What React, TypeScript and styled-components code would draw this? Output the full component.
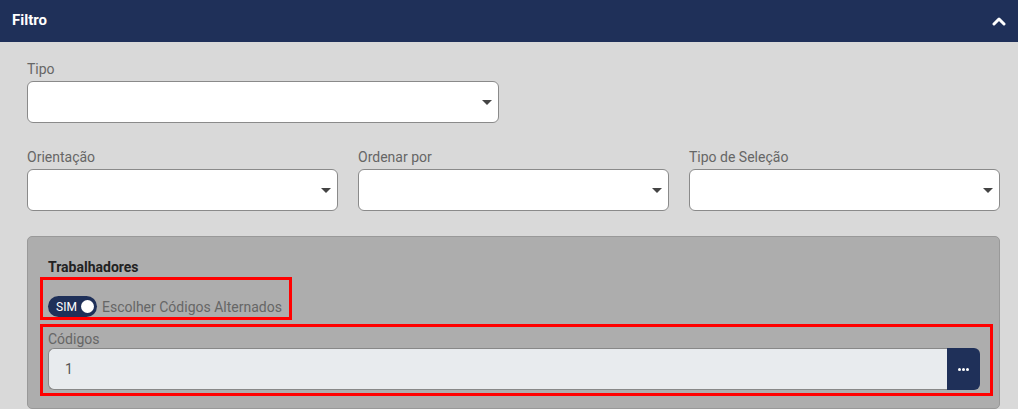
import React from 'react';
import styled, { createGlobalStyle } from 'styled-components';

const navy = '#1f3059';

const GlobalStyle = createGlobalStyle`
  html, body {
    margin: 0;
    padding: 0;
    background: #d9d9d9;
    font-family: Roboto, "Liberation Sans", Arial, sans-serif;
  }
  * {
    box-sizing: border-box;
  }
`;

const Page = styled.div`
  width: 1018px;
  height: 409px;
  overflow: hidden;
  background: #d9d9d9;
`;

const Header = styled.div`
  height: 42px;
  background: ${navy};
  display: flex;
  align-items: center;
  justify-content: space-between;
  padding: 0 12px 0 12px;
  color: #fff;
`;

const HeaderTitle = styled.div`
  font-size: 15px;
  font-weight: 700;
  margin-top: -2px;
`;

const Body = styled.div`
  padding: 19px 18px 0 27px;
`;

const Field = styled.div<{ width?: string }>`
  display: flex;
  flex-direction: column;
  width: ${(p) => p.width || 'auto'};
`;

const Label = styled.label`
  font-size: 14px;
  line-height: 17px;
  color: #666;
  margin-bottom: 3px;
`;

const SelectBox = styled.div`
  position: relative;
  height: 42px;
  background: #fff;
  border: 1px solid #8a8a8a;
  border-radius: 6px;
`;

const Caret = styled.span`
  position: absolute;
  right: 6px;
  top: 18px;
  width: 0;
  height: 0;
  border-left: 5px solid transparent;
  border-right: 5px solid transparent;
  border-top: 5px solid #444;
`;

const Row = styled.div`
  display: grid;
  grid-template-columns: repeat(3, 1fr);
  column-gap: 20px;
  margin-top: 26px;
`;

const Panel = styled.div`
  margin-top: 25px;
  background: #adadad;
  border: 1px solid #999;
  border-radius: 5px;
  padding: 22px 6px 12px 12px;
`;

const PanelTitle = styled.div`
  font-size: 14px;
  font-weight: 700;
  line-height: 17px;
  color: #222;
  padding-left: 8px;
`;

const Highlight = styled.div<{ width?: string; pad: string; gap?: number }>`
  border: 3px solid #ff0000;
  width: ${(p) => p.width || 'auto'};
  padding: ${(p) => p.pad};
  margin-top: ${(p) => p.gap || 0}px;
`;

const ToggleRow = styled.div`
  display: flex;
  align-items: center;
  gap: 5px;
`;

const Toggle = styled.div`
  width: 49px;
  height: 21px;
  border-radius: 11px;
  background: ${navy};
  display: flex;
  align-items: center;
  justify-content: space-between;
  padding: 0 3px 0 8px;
  color: #fff;
  font-size: 12px;
`;

const Knob = styled.span`
  width: 13px;
  height: 13px;
  border-radius: 50%;
  background: #fff;
`;

const ToggleText = styled.span`
  font-size: 14px;
  color: #666;
`;

const InputGroup = styled.div`
  display: flex;
  height: 42px;
`;

const Input = styled.div`
  flex: 1;
  background: #e8ebee;
  border: 1px solid #888;
  border-right: none;
  border-radius: 6px 0 0 6px;
  display: flex;
  align-items: center;
  padding-left: 16px;
  font-size: 14px;
  color: #555;
`;

const DotsButton = styled.div`
  width: 33px;
  background: ${navy};
  border-radius: 0 6px 6px 0;
  display: flex;
  align-items: center;
  justify-content: center;
  gap: 1px;
`;

const Dot = styled.span`
  width: 3px;
  height: 3px;
  border-radius: 50%;
  background: #fff;
`;

const ChevronUp = () => (
  <svg width="14" height="10" viewBox="0 0 14 10">
    <polyline points="2,8 7,3 12,8" fill="none" stroke="#fff" strokeWidth="3" strokeLinecap="round" strokeLinejoin="round" />
  </svg>
);

const Select: React.FC<{ label: string; width?: string }> = ({ label, width }) => (
  <Field width={width}>
    <Label>{label}</Label>
    <SelectBox>
      <Caret />
    </SelectBox>
  </Field>
);

export default function App() {
  return (
    <Page>
      <GlobalStyle />
      <Header>
        <HeaderTitle>Filtro</HeaderTitle>
        <ChevronUp />
      </Header>
      <Body>
        <Select label="Tipo" width="472px" />
        <Row>
          <Select label="Orientação" />
          <Select label="Ordenar por" />
          <Select label="Tipo de Seleção" />
        </Row>
        <Panel>
          <PanelTitle>Trabalhadores</PanelTitle>
          <Highlight width="252px" pad="16px 0 0 5px" gap={1}>
            <ToggleRow>
              <Toggle>
                SIM
                <Knob />
              </Toggle>
              <ToggleText>Escolher Códigos Alternados</ToggleText>
            </ToggleRow>
          </Highlight>
          <Highlight pad="2px 10px 3px 5px" gap={4}>
            <Label>Códigos</Label>
            <InputGroup>
              <Input>1</Input>
              <DotsButton>
                <Dot />
                <Dot />
                <Dot />
              </DotsButton>
            </InputGroup>
          </Highlight>
        </Panel>
      </Body>
    </Page>
  );
}
